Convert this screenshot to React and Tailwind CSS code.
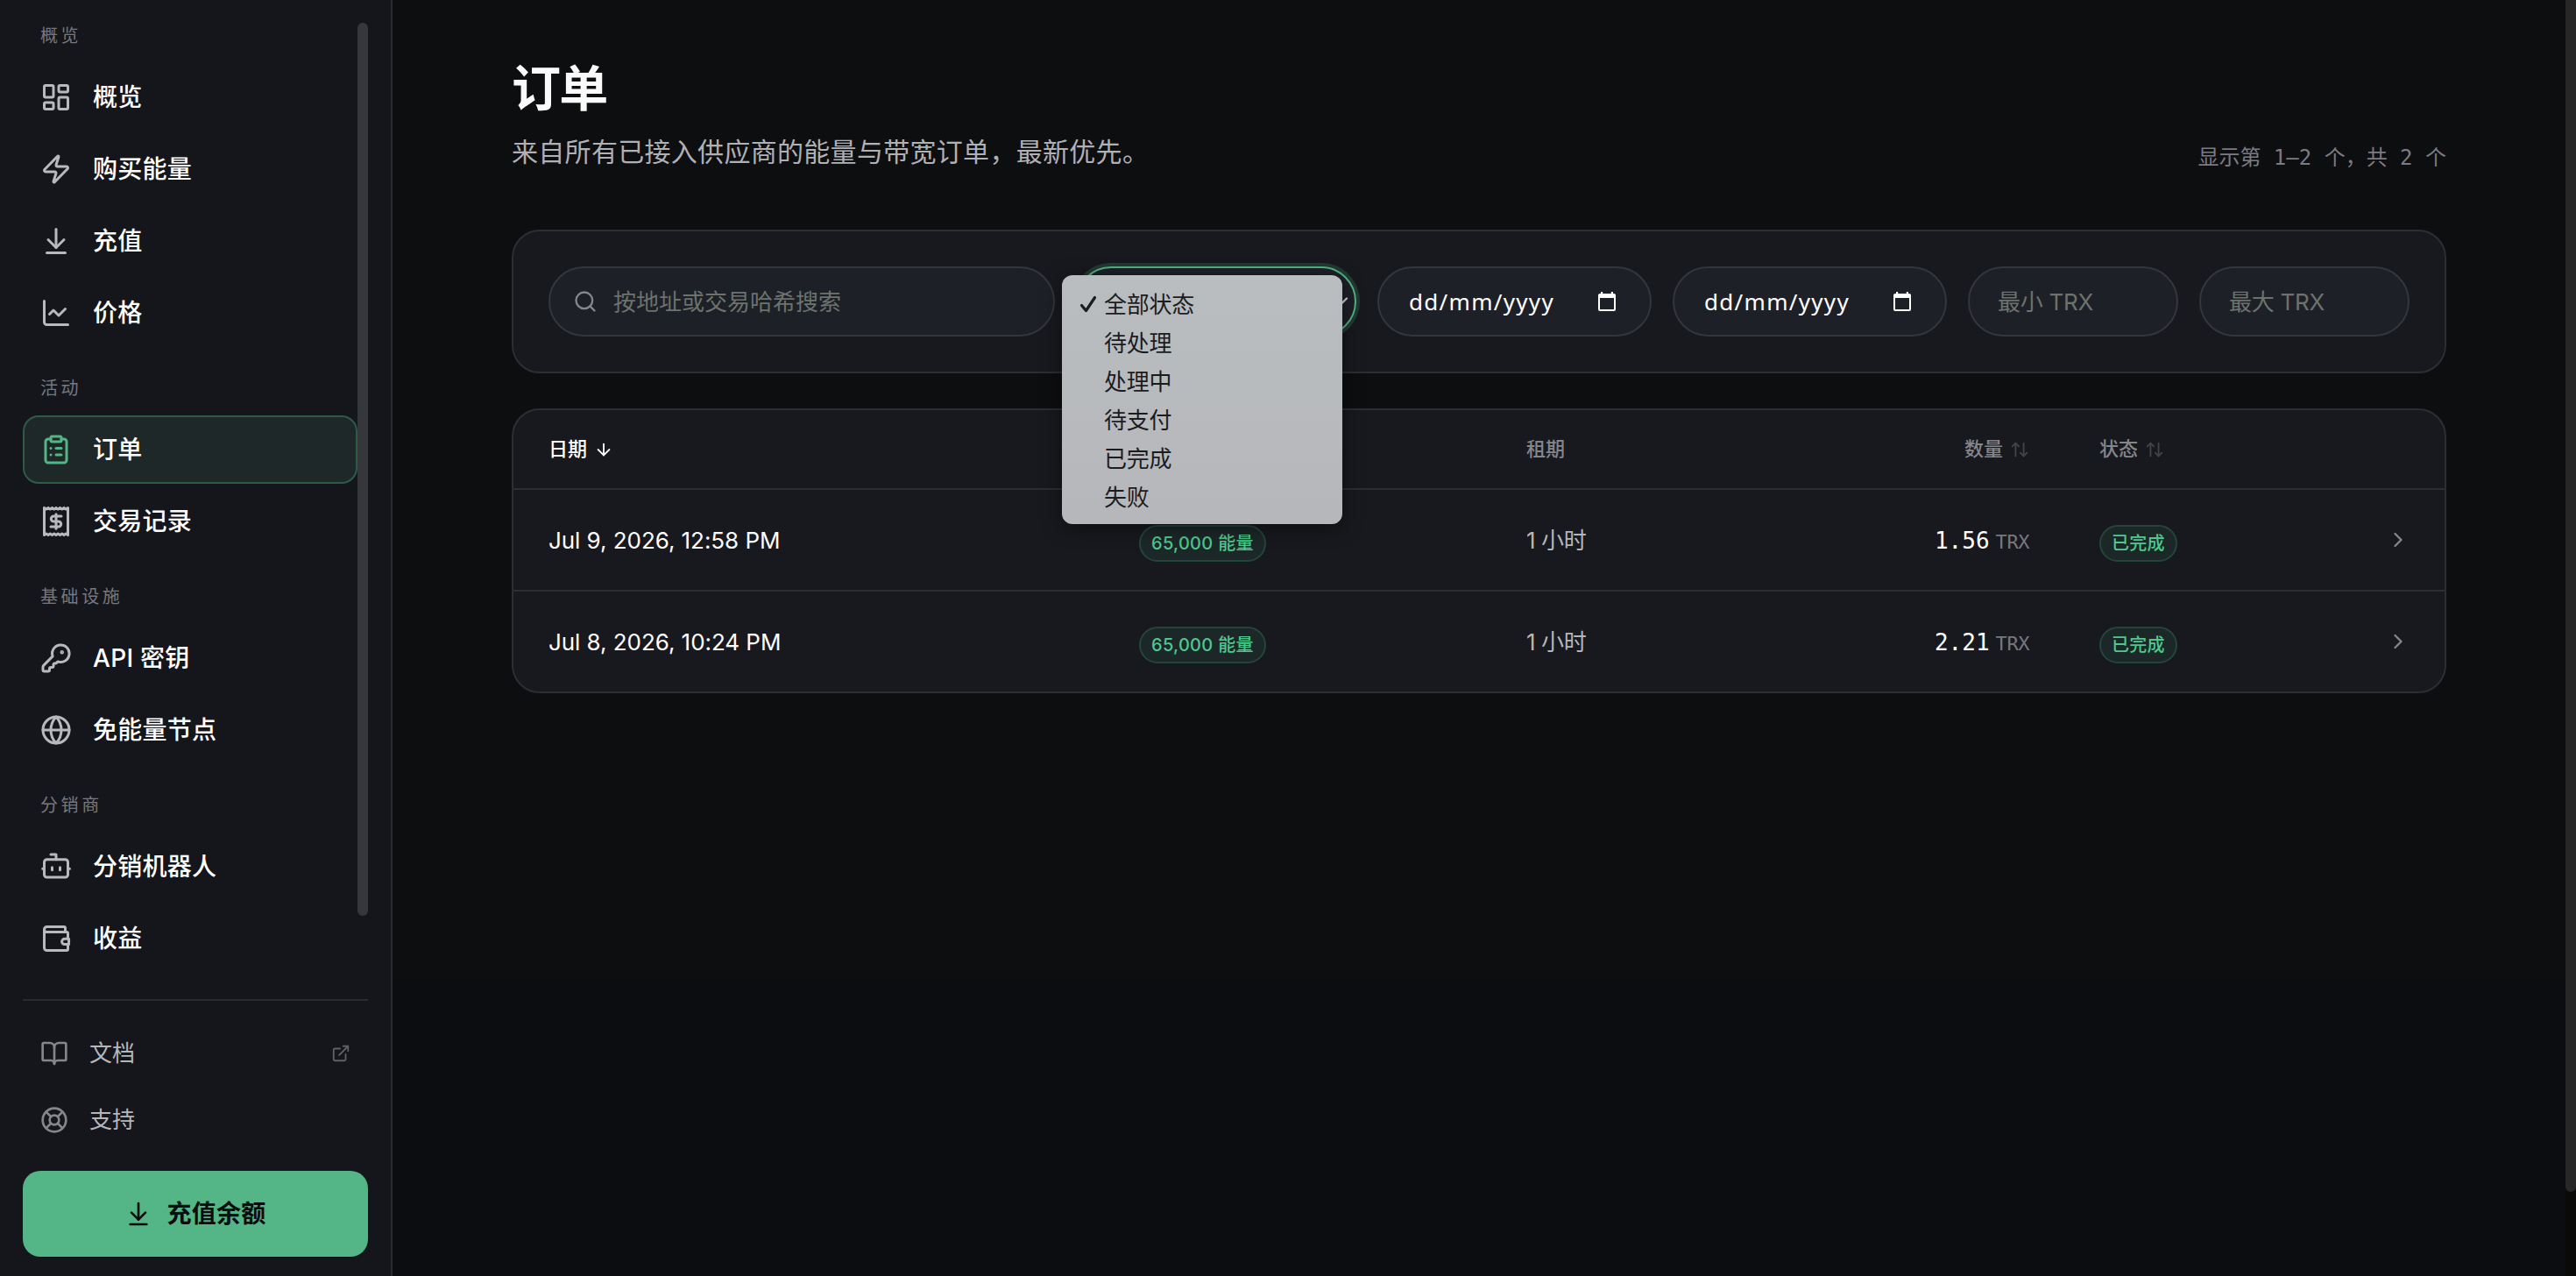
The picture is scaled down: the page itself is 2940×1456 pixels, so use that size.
import {
  LayoutDashboard,
  Zap,
  ArrowDownToLine,
  ChartLine,
  ClipboardList,
  KeyRound,
  Globe,
  BookOpen,
  LifeBuoy,
  ExternalLink,
  Search,
  ChevronDown,
  ChevronRight,
  ArrowDown,
  ArrowUpDown,
} from "lucide-react";

const iconProps = {
  viewBox: "0 0 24 24",
  fill: "none",
  stroke: "currentColor",
  strokeWidth: 2,
  strokeLinecap: "round",
  strokeLinejoin: "round",
};

function ReceiptIcon({ className }) {
  return (
    <svg {...iconProps} className={className}>
      <path d="M3 1.6v20.8l1.5-1 1.5 1 1.5-1 1.5 1 1.5-1 1.5 1 1.5-1 1.5 1 1.5-1 1.5 1 1.5-1 1.5 1V1.6l-1.5 1-1.5-1-1.5 1-1.5-1-1.5 1-1.5-1-1.5 1-1.5-1-1.5 1-1.5-1-1.5 1z" />
      <path d="M16 8h-5.8a2 2 0 1 0 0 4h3.6a2 2 0 1 1 0 4H8" />
      <path d="M12 17.5v-11" />
    </svg>
  );
}

function BotIcon({ className }) {
  return (
    <svg {...iconProps} className={className}>
      <path d="M12 6.5V2.7H8" />
      <rect x="3" y="6.5" width="18" height="13.5" rx="2" />
      <path d="M1.8 13.5H3M21 13.5h1.3M9 12.5v2M15 12.5v2" />
    </svg>
  );
}

function WalletIcon({ className }) {
  return (
    <svg {...iconProps} className={className}>
      <path d="M19 7V4a1 1 0 0 0-1-1H5a2 2 0 0 0 0 4h15a1 1 0 0 1 1 1v4M3 5v14a2 2 0 0 0 2 2h15a1 1 0 0 0 1-1v-3.5" />
      <path d="M21.7 12.2h-3.2a2.1 2.1 0 0 0 0 4.2h3.2z" />
    </svg>
  );
}

function CalendarIcon() {
  return (
    <svg viewBox="0 0 20 22" className="h-[22px] w-[20px] fill-white">
      <path
        fillRule="evenodd"
        d="M3 0h2.2v2h9.6V0H17v2h1a2 2 0 0 1 2 2v16a2 2 0 0 1-2 2H2a2 2 0 0 1-2-2V4a2 2 0 0 1 2-2h1zM2 7v13h16V7z"
      />
    </svg>
  );
}

const sections = [
  {
    title: "概览",
    items: [
      { label: "概览", icon: LayoutDashboard },
      { label: "购买能量", icon: Zap },
      { label: "充值", icon: ArrowDownToLine },
      { label: "价格", icon: ChartLine },
    ],
  },
  {
    title: "活动",
    items: [
      { label: "订单", icon: ClipboardList, active: true },
      { label: "交易记录", icon: ReceiptIcon },
    ],
  },
  {
    title: "基础设施",
    items: [
      { label: "API 密钥", icon: KeyRound },
      { label: "免能量节点", icon: Globe },
    ],
  },
  {
    title: "分销商",
    items: [
      { label: "分销机器人", icon: BotIcon },
      { label: "收益", icon: WalletIcon },
    ],
  },
];

const statuses = ["全部状态", "待处理", "处理中", "待支付", "已完成", "失败"];

const orders = [
  { date: "Jul 9, 2026, 12:58 PM", resource: "65,000 能量", term: "1 小时", amount: "1.56", status: "已完成" },
  { date: "Jul 8, 2026, 10:24 PM", resource: "65,000 能量", term: "1 小时", amount: "2.21", status: "已完成" },
];

function NavItem({ label, icon: Icon, active }) {
  return (
    <a
      className={
        active
          ? "flex h-[78px] items-center gap-6 rounded-[18px] border-2 border-[#2f5a47] bg-[#1e2828] px-[18px] text-white"
          : "flex h-[78px] items-center gap-6 rounded-[18px] border-2 border-transparent px-[18px] text-white"
      }
    >
      <Icon className={active ? "size-9 text-[#54b586]" : "size-9 text-[#b8b9be]"} />
      <span className="text-[28px] leading-[42px] font-medium tracking-[0.01em]">{label}</span>
    </a>
  );
}

function Sidebar() {
  return (
    <aside className="flex h-full w-[448px] shrink-0 flex-col border-r-2 border-[#2a2b2f] bg-[#15161b] px-[26px] pt-[26px] pb-[22px]">
      <div className="flex h-[1114px] justify-between overflow-hidden">
        <nav className="flex flex-1 flex-col gap-8">
          {sections.map((s) => (
            <div key={s.title}>
              <div className="mb-4 pl-5 text-[20px] leading-[30px] tracking-[0.18em] text-[#77787d]">
                {s.title}
              </div>
              <div className="flex flex-col gap-1">
                {s.items.map((item) => (
                  <NavItem key={item.label} {...item} />
                ))}
              </div>
            </div>
          ))}
        </nav>
        <div className="h-[1019px] w-3 rounded-full bg-[#36373b]" />
      </div>

      <div className="border-t-2 border-[#2a2b2f] pt-[22px] text-[26px] text-[#b5b6ba]">
        <a className="flex h-[76px] items-center gap-6 px-5">
          <BookOpen className="size-8 text-[#85868b]" />
          <span className="flex-1 leading-10">文档</span>
          <ExternalLink className="size-[22px] text-[#5f6065]" />
        </a>
        <a className="flex h-[76px] items-center gap-6 px-5">
          <LifeBuoy className="size-8 text-[#85868b]" />
          <span className="leading-10">支持</span>
        </a>
      </div>

      <button className="mt-5 flex h-[98px] items-center justify-center gap-4 rounded-[20px] bg-[#54b586] text-[28px] font-semibold tracking-[0.01em] text-[#0b0d0f]">
        <ArrowDownToLine className="size-8" />
        <span>充值余额</span>
      </button>
    </aside>
  );
}

function StatusSelect() {
  return (
    <div className="relative h-20 w-[320px]">
      <div className="flex h-20 items-center justify-end rounded-full border-2 border-[#54b586] bg-[#1e2028] pr-[2px] ring-4 ring-[#223a32]">
        <ChevronDown className="size-7 text-[#d0d1d4]" />
      </div>
      {/* open option list */}
      <ul className="absolute -left-4 top-[10px] z-10 h-[284px] w-[320px] rounded-xl bg-linear-to-b from-[#b9bdc0] to-[#b6b7ba] pt-[11px] text-[26px] text-[#1b1c1e] shadow-[0_4px_24px_rgba(0,0,0,0.45)]">
        {statuses.map((s, i) => (
          <li key={s} className="flex h-11 items-center pl-[20px]">
            <span className="flex w-7 items-center">
              {i === 0 && (
                <svg viewBox="0 0 20 20" className="size-5 fill-none stroke-[#1b1c1e] stroke-[3.2]">
                  <path d="M2.5 11.5 7.5 17.5 17.5 2.5" strokeLinecap="round" strokeLinejoin="round" />
                </svg>
              )}
            </span>
            <span className="pt-[2px] leading-[42px] tracking-[-0.01em]">{s}</span>
          </li>
        ))}
      </ul>
    </div>
  );
}

function DateField() {
  return (
    <div className="flex h-20 w-[313px] items-center justify-between rounded-full border-2 border-[#34363b] bg-[#1e2028] pl-[34px] pr-[39px] text-[26px] text-white">
      <span className="font-['Noto_Sans'] tracking-[0.05em]">dd/mm/yyyy</span>
      <CalendarIcon />
    </div>
  );
}

function AmountField({ label }) {
  return (
    <div className="flex h-20 w-60 items-center rounded-full border-2 border-[#34363b] bg-[#1e2028] pl-8 text-[26px] tracking-[-0.01em] text-[#6b736c]">
      {label}
    </div>
  );
}

function Filters() {
  return (
    <section className="mt-[63px] flex h-[164px] items-center gap-6 rounded-[32px] border-2 border-[#2c2e33] bg-[#18191e] px-10">
      <div className="flex h-20 flex-1 items-center gap-[18px] rounded-full border-2 border-[#34363b] bg-[#1e2028] pl-[26px] text-[26px] text-[#6b736c]">
        <Search className="size-7 text-[#85868e]" />
        <span>按地址或交易哈希搜索</span>
      </div>
      <StatusSelect />
      <DateField />
      <DateField />
      <AmountField label="最小 TRX" />
      <AmountField label="最大 TRX" />
    </section>
  );
}

function Pill({ children }) {
  return (
    <span className="mt-2 inline-flex h-[42px] items-center rounded-full border-2 border-[#24463a] bg-[#1c2728] px-[12px] text-[20px] font-medium tracking-[0.015em] whitespace-nowrap text-[#4fc88e]">
      {children}
    </span>
  );
}

function OrdersTable() {
  const cols = "grid grid-cols-[674px_442px_574px_80px_1fr_28px] items-center pl-10 pr-[39px]";
  return (
    <section className="mt-10 overflow-hidden rounded-[32px] border-2 border-[#2c2e33] bg-[#18191e]">
      <div className={`${cols} h-[91px] border-b-2 border-[#2c2e33] text-[22px] font-medium text-[#85868b]`}>
        <span className="flex items-center gap-2 text-white">
          日期 <ArrowDown className="size-[22px]" />
        </span>
        <span />
        <span className="flex items-center justify-between">
          租期
          <span className="flex items-center gap-2">
            数量 <ArrowUpDown className="size-[22px] text-[#434449]" />
          </span>
        </span>
        <span />
        <span className="flex items-center gap-2">
          状态 <ArrowUpDown className="size-[22px] text-[#434449]" />
        </span>
        <span />
      </div>
      {orders.map((o, i) => (
        <div
          key={o.date}
          className={`${cols} text-[26px] ${i === 0 ? "h-[116px] border-b-2 border-[#2c2e33]" : "h-[114px]"}`}
        >
          <span className="text-white tracking-[-0.002em]">{o.date}</span>
          <span>
            <Pill>{o.resource}</Pill>
          </span>
          <span className="flex items-center justify-between text-[#b5b6ba]">
            <span className="tracking-[-0.015em]">{o.term}</span>
            <span className="pt-[2px] font-['DejaVu_Sans_Mono'] text-white">
              {o.amount}
              <span className="ml-[7px] text-[22px] tracking-[-0.02em] text-[#77787d]">TRX</span>
            </span>
          </span>
          <span />
          <span>
            <Pill>{o.status}</Pill>
          </span>
          <ChevronRight className="size-7 text-[#85868b]" />
        </div>
      ))}
    </section>
  );
}

export default function App() {
  return (
    <div className="flex h-[1456px] w-[2940px] overflow-hidden bg-[#0d0e10] font-['Inter','Noto_Sans_CJK_SC',sans-serif]">
      <Sidebar />
      <main className="flex-1 bg-linear-to-b from-[#0d0e10] from-[1118px] to-[#0b0d11] to-[1118px] px-[136px] pt-[61px]">
        <header className="flex items-end justify-between">
          <div>
            <h1 className="text-[56px] leading-[80px] font-bold tracking-[-0.03em] text-[#fafafa]">订单</h1>
            <p className="mt-[6px] text-[30px] leading-[52px] tracking-[0.01em] text-[#b0b1b6]">
              来自所有已接入供应商的能量与带宽订单，最新优先。
            </p>
          </div>
          <div className="font-['DejaVu_Sans_Mono','Noto_Sans_CJK_SC',monospace] text-[24px] leading-[38px] text-[#7b7b83]">
            显示第 1–2 个，共 2 个
          </div>
        </header>
        <Filters />
        <OrdersTable />
      </main>
      <div className="w-3 bg-[#0a0a09]">
        <div className="h-[1360px] rounded-b-full bg-[#272727]" />
      </div>
    </div>
  );
}
